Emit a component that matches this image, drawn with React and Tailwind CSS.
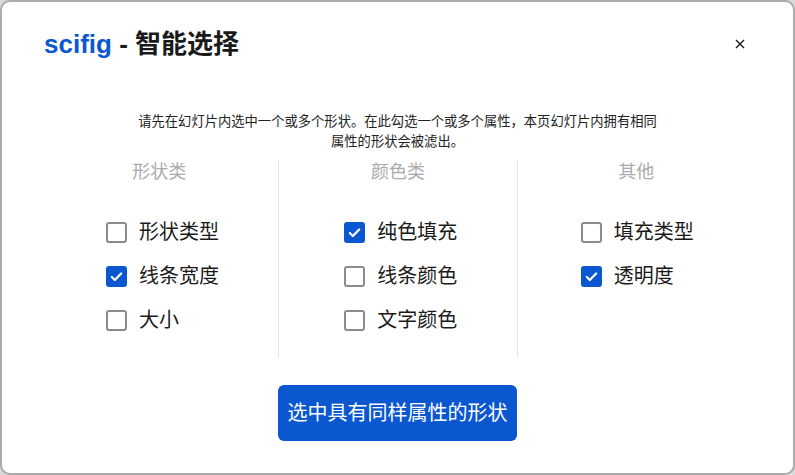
import { useState } from 'react';

const font = { fontFamily: '"Liberation Sans", "Noto Sans CJK SC", sans-serif' };

const columns = [
  { title: '形状类', pad: 'pl-[66px]', items: [['形状类型', false], ['线条宽度', true], ['大小', false]] },
  { title: '颜色类', pad: 'pl-[65px]', items: [['纯色填充', true], ['线条颜色', false], ['文字颜色', false]] },
  { title: '其他', pad: 'pl-[63px]', items: [['填充类型', false], ['透明度', true]] },
];

function Checkbox({ checked, onClick }) {
  return (
    <button
      onClick={onClick}
      className={
        checked
          ? 'flex h-[21px] w-[21px] items-center justify-center rounded-[3px] bg-[#0b57d0]'
          : 'h-[21px] w-[21px] rounded-[3px] border-2 border-[#8b8b8b] bg-white'
      }
    >
      {checked && (
        <svg width="15" height="15" viewBox="0 0 16 16" fill="none">
          <path d="M3 8.5l3.2 3.2L13 4.8" stroke="white" strokeWidth="2.4" strokeLinecap="round" strokeLinejoin="round" />
        </svg>
      )}
    </button>
  );
}

export default function App() {
  const [state, setState] = useState(columns.map((c) => c.items.map(([, v]) => v)));

  const toggle = (ci, ii) =>
    setState((s) => s.map((col, a) => (a === ci ? col.map((v, b) => (b === ii ? !v : v)) : col)));

  return (
    <div className="h-[475px] w-[795px] bg-[#d9d9d9]" style={font}>
      <div className="flex h-full w-full flex-col rounded-[10px] border-2 border-[#ababab] bg-white">
        <div className="flex h-[84px] shrink-0 items-center justify-between pl-[42px] pr-[48px]">
          <h1 className="text-[26px] font-bold text-[#1a1a1a]">
            <span className="text-[#0b57d0]">scifig</span> - 智能选择
          </h1>
          <button className="text-[#222]">
            <svg width="10" height="10" viewBox="0 0 10 10">
              <path d="M1 1l8 8M9 1l-8 8" stroke="currentColor" strokeWidth="1.5" />
            </svg>
          </button>
        </div>

        <p className="mx-auto mt-[26px] max-w-[525px] text-center text-[13.3px] leading-5 text-[#222]">
          请先在幻灯片内选中一个或多个形状。在此勾选一个或多个属性，本页幻灯片内拥有相同属性的形状会被滤出。
        </p>

        <div className="mx-[38px] mt-2 grid grid-cols-3">
          {columns.map((col, ci) => (
            <div key={col.title} className={ci > 0 ? 'border-l border-[#e3e3e3] pb-4' : 'pb-4'}>
              <div className="text-center text-[18px] leading-6 text-[#ababab]">{col.title}</div>
              <div className={`mt-[26px] flex flex-col ${col.pad}`}>
                {col.items.map(([label], ii) => (
                  <label key={label} className="flex h-11 items-center gap-3 text-[20px] text-[#1a1a1a]">
                    <Checkbox checked={state[ci][ii]} onClick={() => toggle(ci, ii)} />
                    {label}
                  </label>
                ))}
              </div>
            </div>
          ))}
        </div>

        <button className="mx-auto mt-[27px] h-[56px] w-[239px] rounded-md bg-[#0b57d0] text-[20px] text-white">
          选中具有同样属性的形状
        </button>
      </div>
    </div>
  );
}
